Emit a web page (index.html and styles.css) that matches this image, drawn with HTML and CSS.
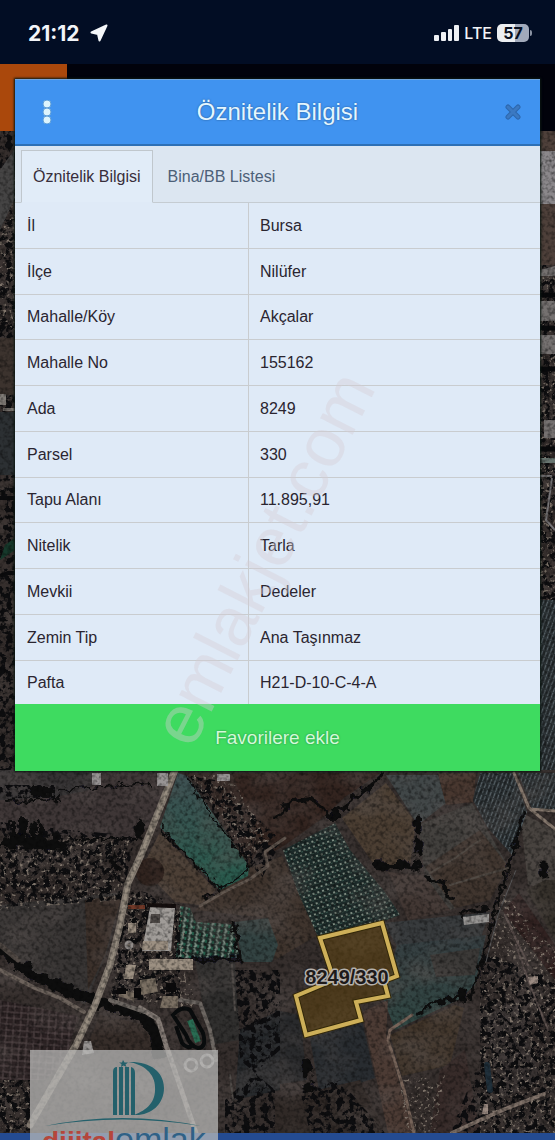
FILE: index.html
```html
<!DOCTYPE html>
<html lang="tr">
<head>
<meta charset="utf-8">
<meta name="viewport" content="width=device-width, initial-scale=1">
<title>Öznitelik Bilgisi</title>
<link rel="stylesheet" href="styles.css">
</head>
<body>
<div class="screen">
  <svg class="map" viewBox="0 0 555 1140" preserveAspectRatio="xMidYMid slice" role="img" aria-label="Uydu haritası, parsel 8249/330">
    <defs>
      <filter id="darkSpots" x="0" y="0" width="100%" height="100%" color-interpolation-filters="sRGB">
        <feTurbulence type="fractalNoise" baseFrequency="0.16" numOctaves="3" seed="4"/>
        <feColorMatrix values="0 0 0 0 0.05  0 0 0 0 0.05  0 0 0 0 0.06  9 0 0 0 -4.3"/>
        <feComposite in2="SourceGraphic" operator="in"/>
      </filter>
      <filter id="lightSpots" x="0" y="0" width="100%" height="100%" color-interpolation-filters="sRGB">
        <feTurbulence type="fractalNoise" baseFrequency="0.3" numOctaves="2" seed="11"/>
        <feColorMatrix values="0 0 0 0 0.5  0 0 0 0 0.46  0 0 0 0 0.42  0 6 0 0 -3.5"/>
        <feComposite in2="SourceGraphic" operator="in"/>
      </filter>
      <filter id="grain" x="0" y="0" width="100%" height="100%" color-interpolation-filters="sRGB">
        <feTurbulence type="fractalNoise" baseFrequency="0.25" numOctaves="3" seed="7"/>
        <feColorMatrix values="0 0 0 0 0.02  0 0 0 0 0.02  0 0 0 0 0.02  1.2 0 0 0 -0.5"/>
      </filter>
      <filter id="mottle" x="0" y="0" width="100%" height="100%" color-interpolation-filters="sRGB">
        <feTurbulence type="fractalNoise" baseFrequency="0.02 0.03" numOctaves="3" seed="2"/>
        <feColorMatrix values="0 0 0 0 0.36  0 0 0 0 0.33  0 0 0 0 0.32  1.2 0 0 0 -0.5"/>
      </filter>
      <filter id="ragged" x="-5%" y="-5%" width="110%" height="110%">
        <feTurbulence type="fractalNoise" baseFrequency="0.12" numOctaves="3" seed="9"/>
        <feDisplacementMap in="SourceGraphic" scale="12" xChannelSelector="R" yChannelSelector="G"/>
      </filter>
      <pattern id="trees" width="5" height="5" patternUnits="userSpaceOnUse" patternTransform="rotate(-18)">
        <rect width="5" height="5" fill="#1d2b2a"/><rect x="1" y="1" width="2" height="2" fill="#7d8b80"/><rect x="3" y="3" width="2" height="1" fill="#39584e"/>
      </pattern>
      <pattern id="rows" width="4" height="6" patternUnits="userSpaceOnUse" patternTransform="rotate(20)">
        <rect width="4" height="6" fill="#2d3437"/><rect width="1" height="5" fill="#596368"/><rect x="2" width="1" height="4" fill="#1f2325"/>
      </pattern>
      <pattern id="plot" width="7" height="6" patternUnits="userSpaceOnUse" patternTransform="rotate(4)">
        <rect width="7" height="6" fill="#2a2122"/><path d="M0 1H7M1 0V6" stroke="#55494a" stroke-width="1"/>
      </pattern>
      <pattern id="grove" width="7" height="6" patternUnits="userSpaceOnUse" patternTransform="rotate(8)">
        <rect width="7" height="6" fill="#1e2c28"/><path d="M2 0L4 3L2 5" stroke="#7e9488" stroke-width="2" fill="none"/><path d="M6 2V5" stroke="#24614c" stroke-width="2"/>
      </pattern>
      <linearGradient id="greenField" x1="0" y1="0" x2="0" y2="1"><stop offset="0" stop-color="#3f5052"/><stop offset="1" stop-color="#285c4d"/></linearGradient>
      <linearGradient id="tealField" x1="0" y1="0" x2="0" y2="1"><stop offset="0" stop-color="#363e41"/><stop offset="1" stop-color="#304743"/></linearGradient>
    </defs>

    <rect width="555" height="1140" fill="#352e2c"/>

    <!-- fields -->
    <path d="M0 770H178L160 812L135 840L0 830Z" fill="#3e3636"/>
    <path d="M0 770H95L90 790L50 798L0 800Z" fill="#343233"/>
    <path d="M184 773H290L268 830L248 868L205 790Z" fill="#382c28"/>
    <path d="M232 773H380L345 797L320 820L285 845L268 855L255 830Z" fill="#33241f"/>
    <path d="M250 868L282 856L318 935L275 960L268 918L195 910Z" fill="#3f342d"/>
    <path d="M342 818L386 783L416 823L410 865L375 866Z" fill="#4b3e32"/>
    <path d="M386 775H438L446 803L418 825Z" fill="#414748"/>
    <path d="M438 773H476L473 802L446 805Z" fill="#48372f"/>
    <path d="M418 825L472 803L508 866L490 895L450 910L425 878Z" fill="#413f3c"/>
    <path d="M425 867L480 830L508 866L490 900L455 908Z" fill="#40352e"/>
    <path d="M388 872L425 876L450 910L408 920Z" fill="#423733"/>
    <path d="M384 923L490 912L480 940L398 948Z" fill="#383b3d"/>
    <path d="M397 945L486 935L475 985L458 1000L395 1030L384 1000L388 980Z" fill="url(#tealField)"/>
    <path d="M430 955L480 948L475 975L436 977Z" fill="#3b3937"/>
    <path d="M520 812L555 830V890L528 885Z" fill="#48433f"/>
    <path d="M503 911L519 893L555 945V980Z" fill="#2c1c1b"/>
    <path d="M545 880H555V940L526 890Z" fill="#36312b"/>
    <path d="M390 1035L455 1005L464 1008L450 1065L402 1076Z" fill="#403429"/>
    <path d="M362 1012L388 1000L386 1035L413 1133H388Z" fill="#4c3b34"/>
    <path d="M310 1038L362 1021L375 1078L320 1096Z" fill="#282c30"/>
    <path d="M275 1010L300 1015L307 1080L275 1085Z" fill="#292a2c"/>
    <path d="M275 1100L360 1080L385 1133H275Z" fill="#302926"/>
    <path d="M440 1070L465 1050L480 1133H430Z" fill="#372b29"/>
    <path d="M485 1015L520 1000L540 1080L500 1100Z" fill="#393332"/>
    <path d="M0 905L122 892L110 945L85 1005L30 970L0 945Z" fill="#383534"/>
    <path d="M85 900L122 895L105 955L88 990Z" fill="#3b302a"/>
    <path d="M100 1015L145 1025L155 1050H85Z" fill="#362d29"/>
    <path d="M240 1030L280 1010V1090L235 1100Z" fill="#25282b"/>
    <path d="M195 960L235 960L240 1040L210 1045Z" fill="#302f2e"/>
    <path d="M178 773L187 776L249 866L248 876L220 890L160 827Z" fill="url(#greenField)"/>
    <path d="M160 832L216 890L200 905L175 902L142 868Z" fill="#4c3f35"/>
    <ellipse cx="150" cy="872" rx="14" ry="14" fill="#30231e"/>
    <path d="M235 922L268 918L278 945L272 962H242Z" fill="#334342"/>
    <path d="M0 1000L78 1016L66 1060L45 1080H0Z" fill="url(#plot)"/>
    <path d="M180 906L190 908L196 922L232 924L240 958H176Z" fill="url(#grove)"/>
    <path d="M283 850L335 823L350 850L385 892L400 915L384 921L318 937L297 890Z" fill="url(#trees)"/>
    <path d="M480 773H514L527 812L512 855L487 827L473 800Z" fill="url(#rows)"/>
    <path d="M518 773H555V810L532 809Z" fill="url(#rows)"/>

    <rect y="131" width="555" height="1009" filter="url(#mottle)"/>

    <!-- hedges and scrub -->
    <g filter="url(#darkSpots)">
      <path d="M0 785H55V798H0ZM0 822L70 830L135 836L122 900L0 907Z"/>
      <path d="M185 775L215 780L282 840L262 878L240 850Z"/>
      <path d="M125 885L180 905L180 1000L110 1000Z"/>
      <path d="M235 970H280V1050L225 1100V1133H275V1090L240 1060Z"/>
      <path d="M0 1080H30V1133H0ZM480 950L555 980V1133H450L480 1060Z"/>
      <path d="M300 1090L340 1080L385 1133H310Z"/>
      <path d="M0 131H15V770H0ZM540 204H555V770H540Z"/>
    </g>
    <g filter="url(#lightSpots)">
      <path d="M0 835L130 838L120 900L0 910Z"/>
      <path d="M190 775L230 775L270 840L250 860Z"/>
      <path d="M125 890L180 905L195 1010L110 1000Z"/>
      <path d="M0 1080H30V1133H0ZM480 970L555 980V1133H480Z"/>
      <path d="M400 1080L445 1075L435 1133H405ZM500 890L555 950V990L490 960Z"/>
      <path d="M0 170H15V330H0ZM540 270H555V600H540Z"/>
    </g>
    <g fill="none" stroke="#0b0b0e" stroke-linecap="round" stroke-linejoin="round" filter="url(#ragged)">
      <path d="M0 950L35 976L90 1000L142 1016L154 1032L160 1055" stroke-width="11"/>
      <path d="M382 775L365 790L345 807L332 814M276 818L292 801L312 799L333 818" stroke-width="4"/>
      <path d="M376 865H412M418 820V868" stroke-width="7" stroke-dasharray="10 12"/>
      <path d="M376 866L412 868" stroke-width="6"/>
      <path d="M426 877L444 884L450 898M418 1012L436 1003L460 996" stroke-width="4"/>
      <path d="M463 991V998" stroke-width="9"/>
      <path d="M524 812L514 850L495 910L483 960L470 1000" stroke-width="3"/>
      <path d="M462 914L485 908" stroke-width="4"/>
      <path d="M75 839H135M5 801L60 799M60 790L90 788L150 784" stroke-width="2"/>
      <path d="M308 1063V1070M309 1086V1089" stroke-width="9"/>
      <path d="M187 780L250 868L220 890L160 828" stroke-width="2"/>
      <path d="M178 959H240L233 924M205 899L214 895" stroke-width="3"/>
      <path d="M543 867V873" stroke-width="9"/>
      <path d="M40 836V826M12 842V824M24 842V822M33 842V826M55 842V834" stroke-width="6"/>
    </g>
    <g fill="#0d0d10" filter="url(#ragged)">
      <path d="M0 842L9 834L70 842L66 850L0 848ZM136 838L137 820L142 822L143 840ZM30 795L34 786L54 786V796Z"/>
      <path d="M110 870L114 850L119 870ZM330 808H341V820H334Z"/>
    </g>

    <!-- roads and tracks -->
    <g fill="none" stroke-linecap="round" stroke-linejoin="round">
      <path d="M175 770L160 808L141 855L128 883L120 925L110 965L95 1005L76 1045L30 1125" stroke="#81786e" stroke-width="7"/>
      <path d="M175 770L160 808L141 855L128 883L120 925L110 965L95 1005L76 1045" stroke="#978d80" stroke-width="3"/>
      <path d="M0 970L35 988L60 998L84 1012" stroke="#6d635c" stroke-width="4"/>
      <path d="M0 945L18 960" stroke="#534b46" stroke-width="5"/>
      <path d="M200 906L222 893L250 879L268 866L265 852L285 838" stroke="#635850" stroke-width="3"/>
      <path d="M140 1008L158 1019L166 1045L196 1133" stroke="#847b75" stroke-width="5"/>
      <path d="M110 1000L145 1012M180 1000L200 1003L210 1030L216 1060" stroke="#6d6762" stroke-width="4"/>
      <path d="M514 773L529 808L555 829M530 809L555 811" stroke="#84776c" stroke-width="3"/>
      <path d="M412 1015L390 1030L388 1040L404 1090L414 1133" stroke="#776459" stroke-width="3"/>
      <path d="M452 1133L480 1120L505 1109L544 1094" stroke="#807269" stroke-width="4"/>
      <path d="M430 873L455 858L480 840M450 885L508 868" stroke="#514a44" stroke-width="2"/>
      <path d="M505 915L528 965M516 945L530 985L548 1030" stroke="#605451" stroke-width="2"/>
      <path d="M232 965L235 1010M230 1075L233 1100" stroke="#514c49" stroke-width="2"/>
      <path d="M516 870L498 915L486 962" stroke="#59595a" stroke-width="1"/>
      <path d="M487 1065L490 1090" stroke="#20303b" stroke-width="6"/>
    </g>

    <!-- buildings -->
    <path d="M150 907L175 908L171 951H142Z" fill="#a09c98"/>
    <path d="M151 914H160V923H150Z" fill="#504b48"/>
    <path d="M147 905L176 906" stroke="#160f0e" stroke-width="4"/>
    <path d="M128 923H136V933H128ZM149 959H193V970H149ZM126 965H136L133 979H124ZM143 941H168V950H142Z" fill="#9c9082"/>
    <path d="M92 773H101V785H92ZM157 773H168V786H157ZM217 774H230V781H217Z" fill="#989494"/>
    <path d="M128 905H145V909H128Z" fill="#713928"/>
    <path d="M140 980L155 978L158 992L140 995ZM163 996H178V1008H160ZM122 990L136 993L134 1001L118 996Z" fill="#7b7063"/>
    <path d="M117 988H126V994H116ZM134 988H141V998H134ZM166 983H176V992H166Z" fill="#0b0a0b"/>
    <path d="M463 917L489 914V922L464 925Z" fill="#979593"/>
    <path d="M528 977L538 976V983L530 985ZM484 1104H488V1114H482Z" fill="#9b8b82"/>
    <path d="M84 1041L91 1041L94 1053L82 1055Z" fill="#979391"/>
    <g fill="none" stroke="#090c0d" stroke-width="4">
      <path d="M173 1015Q182 1005 190 1010L203 1033Q207 1048 198 1048Q190 1046 186 1035Z"/>
      <path d="M176 1026L182 1043Q188 1050 193 1045"/>
      <path d="M190 1020L198 1042" stroke="#296b52" stroke-width="6"/>
    </g>
    <g fill="none" stroke="#928d8a" stroke-width="3"><circle cx="191" cy="1065" r="6"/><circle cx="207" cy="1061" r="6"/><circle cx="129" cy="945" r="3"/></g>

    <!-- strips either side of the dialog -->
    <path d="M0 170L14 150V200L0 230Z" fill="#454444"/>
    <path d="M0 338H15V395H0Z" fill="#3c332e"/>
    <path d="M0 394H6V405H0ZM3 408H15V411H3Z" fill="#807b76"/>
    <path d="M0 412H15V475H0Z" fill="#2c3033"/>
    <path d="M0 498H15M0 576L8 573H15" fill="none" stroke="#0b0b0d" stroke-width="4"/>
    <path d="M5 545L15 538V550L0 560Z" fill="#16392b"/>
    <path d="M540 131H555V265H540Z" fill="#4e403a"/>
    <path d="M540 151H555V204H540Z" fill="#8b888b"/>
    <path d="M540 270L555 266V276H540ZM540 301H555V321H540ZM540 335H555V354H540ZM544 420H555V438H544Z" fill="#757170"/>
    <path d="M540 295H555M540 328H555M540 369H555M540 449H555" stroke="#08090b" stroke-width="5"/>
    <path d="M540 458H555V463H540Z" fill="#697671"/>
    <path d="M552 478L546 520L555 530M540 476H552" fill="none" stroke="#767476" stroke-width="2"/>
    <path d="M540 600H555V770H540Z" fill="url(#rows)"/>

    <rect y="131" width="555" height="1009" filter="url(#grain)"/>

    <!-- selected parcel -->
    <path d="M320 938L382 923L397 976L384 981L388 996L356 1002L361 1020L306 1035L296 996L334 980Z" fill="#5f4310" fill-opacity=".55" stroke="#332809" stroke-width="6"/>
    <path d="M320 938L382 923L397 976L384 981L388 996L356 1002L361 1020L306 1035L296 996L334 980Z" fill="none" stroke="#cdaf59" stroke-width="4"/>
    <text class="parcel-label" x="347" y="984" text-anchor="middle">8249/330</text>

    <!-- page header behind the dialog, bottom toolbar -->
    <rect width="555" height="131" fill="#01020b"/>
    <rect y="64" width="67" height="67" fill="#aa480c"/>
    <rect y="1133" width="555" height="7" fill="#244b91"/>

    <!-- agency logo -->
    <g>
      <rect x="30" y="1050" width="188" height="90" fill="#bdbdbb" fill-opacity=".72"/>
      <g fill="#24606b">
        <path d="M113 1115V1072Q113 1067 117 1067V1115ZM119 1115V1067H123V1115ZM125 1115V1067H129V1115ZM131 1115V1067Q135 1068 135 1073V1115Z"/>
        <path d="M128 1062C149 1061 164 1071 164 1088C164 1105 150 1116 134 1115C147 1110 156 1102 155 1087C155 1074 144 1064 128 1062Z"/>
        <path d="M123 1060L124.500 1062.500L128 1062.500L125.500 1064.500L126.500 1067L123.500 1065.500L121 1067L121.500 1064L119 1062.500H122Z"/>
        <path d="M45 1126Q122 1110 201 1126Q122 1113 45 1126Z"/>
      </g>
      <text class="logo-red" x="42" y="1151">dijital</text>
      <text class="logo-blue" x="115" y="1151">emlak</text>
    </g>
  </svg>

  <header class="status">
    <div class="status-left">
      <span class="clock">21:12</span>
      <svg width="18" height="18" viewBox="0 0 18 18" aria-hidden="true"><path d="M16.500 1.500L1.500 8.500L8 10L9.500 16.500Z" fill="#f5f7fa" stroke="#f5f7fa" stroke-width="2" stroke-linejoin="round"/></svg>
    </div>
    <div class="status-right">
      <svg width="25" height="16" viewBox="0 0 25 16" aria-hidden="true"><g fill="#eef0f4"><rect y="10" width="5" height="6" rx="1"/><rect x="7" y="7" width="5" height="9" rx="1"/><rect x="14" y="4" width="4" height="12" rx="1"/><rect x="20" width="5" height="16" rx="1"/></g></svg>
      <span class="network">LTE</span>
      <span class="battery">57</span>
    </div>
  </header>

  <main class="dialog">
    <div class="dialog-head">
      <button class="icon-button" type="button" aria-label="Menü"><svg width="10" height="24" viewBox="0 0 10 24"><g fill="#ddf4fd" stroke="#5f9fd8" stroke-width="1"><circle cx="5" cy="4" r="4"/><circle cx="5" cy="12" r="4"/><circle cx="5" cy="20" r="4"/></g></svg></button>
      <h1 class="title">Öznitelik Bilgisi</h1>
      <button class="icon-button close" type="button" aria-label="Kapat"><svg width="16" height="16" viewBox="0 0 16 16"><path d="M3 3L13 13M13 3L3 13" stroke="#2c67ad" stroke-width="5" stroke-linecap="round"/><path d="M3 3L13 13M13 3L3 13" stroke="#3b79c2" stroke-width="3" stroke-linecap="round"/></svg></button>
    </div>
    <div class="tabs" role="tablist">
      <button class="tab tab-active" type="button" role="tab" aria-selected="true">Öznitelik Bilgisi</button>
      <button class="tab" type="button" role="tab" aria-selected="false">Bina/BB Listesi</button>
    </div>
    <table class="attributes">
      <tbody>
        <tr><th scope="row">İl</th><td>Bursa</td></tr>
        <tr><th scope="row">İlçe</th><td>Nilüfer</td></tr>
        <tr><th scope="row">Mahalle/Köy</th><td>Akçalar</td></tr>
        <tr><th scope="row">Mahalle No</th><td>155162</td></tr>
        <tr><th scope="row">Ada</th><td>8249</td></tr>
        <tr><th scope="row">Parsel</th><td>330</td></tr>
        <tr><th scope="row">Tapu Alanı</th><td>11.895,91</td></tr>
        <tr><th scope="row">Nitelik</th><td>Tarla</td></tr>
        <tr><th scope="row">Mevkii</th><td>Dedeler</td></tr>
        <tr><th scope="row">Zemin Tip</th><td>Ana Taşınmaz</td></tr>
        <tr><th scope="row">Pafta</th><td>H21-D-10-C-4-A</td></tr>
      </tbody>
    </table>
    <button class="favorite" type="button">Favorilere ekle</button>
  </main>

  <svg class="watermark" viewBox="0 0 555 1140" preserveAspectRatio="xMidYMid slice" aria-hidden="true">
    <text x="192" y="750" transform="rotate(-63 192 750)">emlakjet.com</text>
  </svg>
</div>
</body>
</html>
```
FILE: styles.css
```css
* {
  box-sizing: border-box;
}

body {
  margin: 0;
  background: #01020b;
  font-family: "Liberation Sans", Arial, sans-serif;
  font-size: 16px;
  color: #2a2530;
}

button {
  margin: 0;
  padding: 0;
  border: 0;
  background: none;
  font: inherit;
  color: inherit;
  cursor: pointer;
}

svg {
  display: block;
}

.screen {
  position: relative;
  min-height: 100vh;
  overflow: hidden;
}

.map,
.watermark {
  position: absolute;
  inset: 0;
  width: 100%;
  height: 100%;
}

.watermark {
  pointer-events: none;
}

.watermark text {
  font: 69px "Liberation Sans", Arial, sans-serif;
  fill: #d4cdd4;
  fill-opacity: 0.4;
}

.parcel-label {
  font: bold 20px "Liberation Sans", Arial, sans-serif;
  fill: #1e1a1a;
  stroke: #b5b1ad;
  stroke-width: 3px;
  stroke-linejoin: round;
  paint-order: stroke;
}

.logo-red {
  font: bold 28px "Liberation Sans", Arial, sans-serif;
  fill: #b5463b;
}

.logo-blue {
  font: 34px "Liberation Sans", Arial, sans-serif;
  fill: #2f6186;
}

.status {
  position: relative;
  display: flex;
  justify-content: space-between;
  align-items: center;
  height: 64px;
  padding: 2px 26px 0 28px;
  background: #020d24;
  font-family: Inter, "Liberation Sans", sans-serif;
  color: #f2f4f8;
}

.status-left,
.status-right {
  display: flex;
  align-items: center;
}

.status-left {
  gap: 10px;
}

.status-right {
  gap: 5px;
}

.clock {
  font-size: 21px;
  font-weight: 700;
}

.network {
  font-size: 16px;
  font-weight: 500;
}

.battery {
  position: relative;
  width: 32px;
  border-radius: 5px;
  background: linear-gradient(90deg, #eceef1 57%, #a2aabb 57%);
  font-size: 16px;
  line-height: 18px;
  font-weight: 700;
  text-align: center;
  color: #08101f;
}

.battery::after {
  content: "";
  position: absolute;
  top: 6px;
  right: -3px;
  width: 2px;
  height: 6px;
  border-radius: 0 2px 2px 0;
  background: #8a92a3;
}

.dialog {
  position: relative;
  display: flex;
  flex-direction: column;
  margin: 15px 15px 0;
  background: #dfeaf7;
  box-shadow: 0 0 2px 1px #0b1612;
}

.dialog-head {
  display: flex;
  align-items: center;
  height: 67px;
  padding: 0 10px 0 20px;
  border-top: 1px solid #70a5dd;
  border-bottom: 2px solid #2e70b5;
  background: #4093f0;
}

.icon-button {
  display: grid;
  place-items: center;
  width: 24px;
  height: 40px;
}

.close {
  width: 34px;
}

.title {
  flex: 1;
  margin: 0;
  font-size: 24px;
  line-height: 32px;
  font-weight: 400;
  text-align: center;
  color: #e4f6ff;
  text-shadow: 0 0 2px #215389;
}

.tabs {
  display: flex;
  padding: 4px 6px 0;
  border-bottom: 1px solid #c5ccd2;
  background: #dce6f1;
}

.tab {
  height: 53px;
  margin-bottom: -1px;
  padding: 0 15px;
  color: #4c6078;
}

.tab-active {
  padding: 0 11px;
  border: 1px solid #c0c7cd;
  border-bottom-color: #dfeaf7;
  background: #e1ecf8;
  color: #382e3b;
}

.attributes {
  width: 100%;
  height: 501px;
  border-collapse: separate;
  border-spacing: 0;
  table-layout: fixed;
}

.attributes th,
.attributes td {
  padding: 1px 12px 0;
  border-bottom: 1px solid #c9cccf;
  font-weight: 400;
  text-align: left;
}

.attributes th {
  width: 234px;
  border-right: 1px solid #c9cccf;
}

.attributes td {
  padding-left: 11px;
}

.attributes tr:last-child > * {
  border-bottom: 0;
}

.favorite {
  height: 67px;
  background: #3edb60;
  font-size: 19px;
  color: #d3fad8;
  text-shadow: 0 0 2px #268540;
}
```
